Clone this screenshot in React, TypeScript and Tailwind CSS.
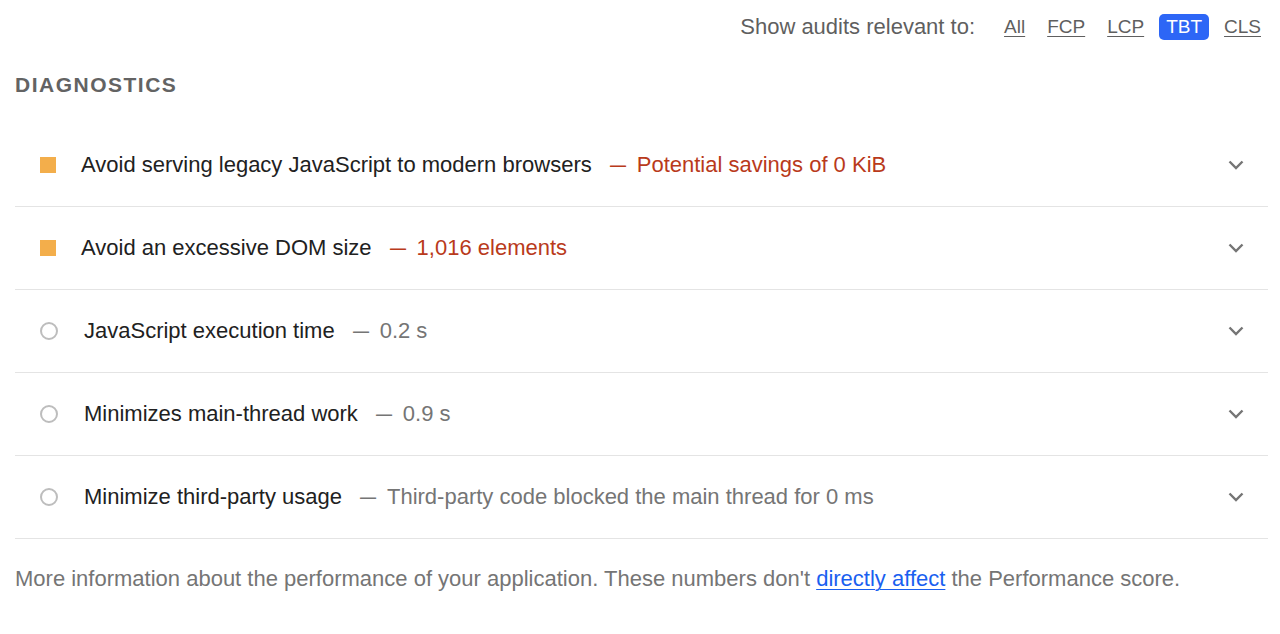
const FONT = "font-['Liberation_Sans',Arial,Helvetica,sans-serif]";

type Audit = {
  title: string;
  value: string;
  kind: 'average' | 'info';
};

const audits: Audit[] = [
  { title: 'Avoid serving legacy JavaScript to modern browsers', value: 'Potential savings of 0 KiB', kind: 'average' },
  { title: 'Avoid an excessive DOM size', value: '1,016 elements', kind: 'average' },
  { title: 'JavaScript execution time', value: '0.2 s', kind: 'info' },
  { title: 'Minimizes main-thread work', value: '0.9 s', kind: 'info' },
  { title: 'Minimize third-party usage', value: 'Third-party code blocked the main thread for 0 ms', kind: 'info' },
];

const filters = ['All', 'FCP', 'LCP', 'TBT', 'CLS'];

function Chevron() {
  return (
    <svg width="16" height="10" viewBox="0 0 16 10" className="shrink-0" aria-hidden="true">
      <polyline points="1.5,1.5 8,8 14.5,1.5" fill="none" stroke="#757575" strokeWidth="2.4" />
    </svg>
  );
}

function AuditRow({ audit }: { audit: Audit }) {
  const isAverage = audit.kind === 'average';
  return (
    <div className="flex items-center h-[83px] border-b border-[#e4e4e4] pl-[25px] pr-[24px]">
      {isAverage ? (
        <div className="w-4 h-4 bg-[#f3ae4b] shrink-0 mr-[25px]" />
      ) : (
        <div className="w-[18px] h-[18px] rounded-full border-2 border-[#bdbdbd] shrink-0 mr-[26px]" />
      )}
      <div className="flex-1 text-[22px] leading-6 text-[#212121] whitespace-nowrap">
        {audit.title}
        <span className={isAverage ? 'text-[#b93a1b]' : 'text-[#757575]'}>
          <span className="inline-block w-4 ml-[15px] mr-[14px] text-center">
            <span className="inline-block scale-x-[0.73]">—</span>
          </span>
          {audit.value}
        </span>
      </div>
      <Chevron />
    </div>
  );
}

export default function App() {
  return (
    <div className={`${FONT} bg-white w-[1280px] h-[634px] pl-[15px] pr-[12px]`}>
      {/* Filter bar */}
      <div className="h-[54px] flex items-center justify-end leading-6 text-[#5f5f5f]">
        <span className="mr-[14px] text-[22px]">Show audits relevant to:</span>
        {filters.map((f) =>
          f === 'TBT' ? (
            <span key={f} className="ml-[8px] px-[7px] h-[26px] flex items-center rounded-[5px] bg-[#2d66f6] text-white text-[19px]">
              {f}
            </span>
          ) : (
            <span key={f} className="ml-[8px] px-[7px] text-[19px] underline underline-offset-[3px] decoration-1">
              {f}
            </span>
          ),
        )}
      </div>

      {/* Header */}
      <div className="pt-[19px] pb-[27px] text-[21px] leading-6 font-bold tracking-[1.5px] text-[#636363]">
        DIAGNOSTICS
      </div>

      {/* Audits */}
      <div>
        {audits.map((a) => (
          <AuditRow key={a.title} audit={a} />
        ))}
      </div>

      {/* Footer */}
      <p className="pt-[28px] text-[22px] leading-6 text-[#757575]">
        More information about the performance of your application. These numbers don't{' '}
        <a href="#" className="text-[#1a5ff0] underline underline-offset-[3px] decoration-1">
          directly affect
        </a>{' '}
        the Performance score.
      </p>
    </div>
  );
}
